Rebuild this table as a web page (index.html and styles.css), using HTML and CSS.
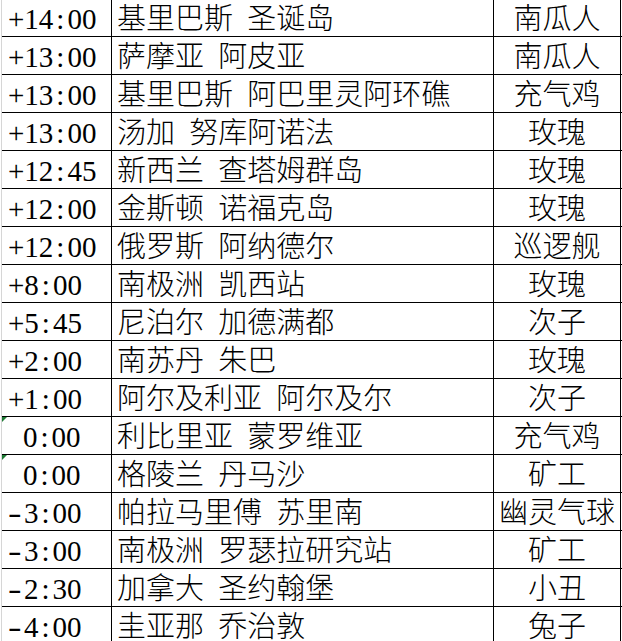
FILE: index.html
```html
<!DOCTYPE html>
<html lang="zh">
<head>
<meta charset="utf-8">
<title>时区表</title>
<link rel="stylesheet" href="styles.css">
</head>
<body>
<div class="sheet">
  <div class="row"><div class="cell tz">+14<span class="c">:</span>00</div><div class="cell place">基里巴斯 圣诞岛</div><div class="cell name">南瓜人</div></div>
  <div class="row"><div class="cell tz">+13<span class="c">:</span>00</div><div class="cell place">萨摩亚 阿皮亚</div><div class="cell name">南瓜人</div></div>
  <div class="row"><div class="cell tz">+13<span class="c">:</span>00</div><div class="cell place">基里巴斯 阿巴里灵阿环礁</div><div class="cell name">充气鸡</div></div>
  <div class="row"><div class="cell tz">+13<span class="c">:</span>00</div><div class="cell place">汤加 努库阿诺法</div><div class="cell name">玫瑰</div></div>
  <div class="row"><div class="cell tz">+12<span class="c">:</span>45</div><div class="cell place">新西兰 查塔姆群岛</div><div class="cell name">玫瑰</div></div>
  <div class="row"><div class="cell tz">+12<span class="c">:</span>00</div><div class="cell place">金斯顿 诺福克岛</div><div class="cell name">玫瑰</div></div>
  <div class="row"><div class="cell tz">+12<span class="c">:</span>00</div><div class="cell place">俄罗斯 阿纳德尔</div><div class="cell name">巡逻舰</div></div>
  <div class="row"><div class="cell tz">+8<span class="c">:</span>00</div><div class="cell place">南极洲 凯西站</div><div class="cell name">玫瑰</div></div>
  <div class="row"><div class="cell tz">+5<span class="c">:</span>45</div><div class="cell place">尼泊尔 加德满都</div><div class="cell name">次子</div></div>
  <div class="row"><div class="cell tz">+2<span class="c">:</span>00</div><div class="cell place">南苏丹 朱巴</div><div class="cell name">玫瑰</div></div>
  <div class="row"><div class="cell tz">+1<span class="c">:</span>00</div><div class="cell place">阿尔及利亚 阿尔及尔</div><div class="cell name">次子</div></div>
  <div class="row"><div class="cell tz text">0<span class="c">:</span>00</div><div class="cell place">利比里亚 蒙罗维亚</div><div class="cell name">充气鸡</div></div>
  <div class="row"><div class="cell tz text">0<span class="c">:</span>00</div><div class="cell place">格陵兰 丹马沙</div><div class="cell name">矿工</div></div>
  <div class="row"><div class="cell tz"><span class="m">-</span>3<span class="c">:</span>00</div><div class="cell place">帕拉马里傅 苏里南</div><div class="cell name">幽灵气球</div></div>
  <div class="row"><div class="cell tz"><span class="m">-</span>3<span class="c">:</span>00</div><div class="cell place">南极洲 罗瑟拉研究站</div><div class="cell name">矿工</div></div>
  <div class="row"><div class="cell tz"><span class="m">-</span>2<span class="c">:</span>30</div><div class="cell place">加拿大 圣约翰堡</div><div class="cell name">小丑</div></div>
  <div class="row"><div class="cell tz"><span class="m">-</span>4<span class="c">:</span>00</div><div class="cell place">圭亚那 乔治敦</div><div class="cell name">兔子</div></div>
</div>
</body>
</html>
```
FILE: styles.css
```css
html, body {
  margin: 0;
  padding: 0;
  background: #ffffff;
  overflow: hidden;
}

.sheet {
  margin-top: -2px;
  margin-left: 1px;
  border-left: 1px solid #d6d6d6;
  font-family: "Liberation Serif", "Noto Sans CJK SC", serif;
  font-size: 29px;
  font-weight: 300;
  color: #000000;
}

.row {
  display: grid;
  grid-template-columns: 110px 382px 127px;
  height: 38px;
  box-sizing: border-box;
  border-top: 1px solid #000000;
}

.cell {
  position: relative;
  box-sizing: border-box;
  border-right: 1px solid #000000;
  line-height: 37px;
  padding-top: 2px;
  white-space: nowrap;
  overflow: hidden;
}

.tz {
  padding-left: 6px;
}

.tz .c {
  margin: 0 3px;
}

.tz .m {
  display: inline-block;
  width: 16px;
  transform: scaleX(1.4);
  transform-origin: left center;
}

.tz.text {
  padding-left: 21px;
  overflow: visible;
}

.tz.text::before {
  content: "";
  position: absolute;
  left: 0;
  top: 0;
  width: 0;
  height: 0;
  border-top: 5px solid #1e7b34;
  border-right: 5px solid transparent;
}

.place {
  padding-left: 5px;
  word-spacing: 7px;
}

.name {
  text-align: center;
}
```
